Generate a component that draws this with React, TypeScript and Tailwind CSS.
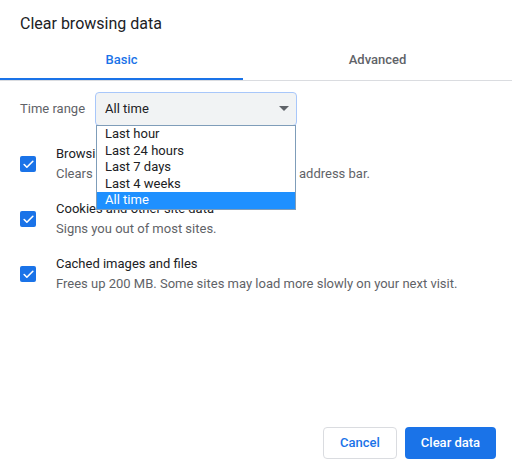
import { Check } from "lucide-react";

const items = [
  { title: "Browsing history", desc: "Clears history and autocompletions in the address bar." },
  { title: "Cookies and other site data", desc: "Signs you out of most sites." },
  { title: "Cached images and files", desc: "Frees up 200 MB. Some sites may load more slowly on your next visit." },
];

const options = ["Last hour", "Last 24 hours", "Last 7 days", "Last 4 weeks", "All time"];

export default function App() {
  return (
    <div className="relative flex h-[468px] w-[512px] flex-col bg-white text-[13px] text-[#202124]" style={{ fontFamily: "Roboto, 'Liberation Sans', sans-serif" }}>
      <div className="px-5 pt-[14px] text-[16px] leading-5">Clear browsing data</div>
      <div className="mt-[16px] flex border-b border-[#dadce0]">
        <div className="flex h-[30px] w-[243px] items-start justify-center border-b-2 border-[#1a73e8] font-medium text-[#1a73e8]">Basic</div>
        <div className="flex h-[30px] flex-1 items-start justify-center font-medium text-[#5f6368]">Advanced</div>
      </div>
      <div className="mt-[11px] flex items-center gap-[10px] px-5">
        <span className="text-[#5f6368]">Time range</span>
        <div className="relative flex h-[34px] w-[202px] items-center rounded border border-[#a8c7fa] bg-[#f1f3f4] pl-[9px]">
          <span>All time</span>
          <svg className="absolute right-[7px] top-[13px]" width="10" height="5" viewBox="0 0 10 5"><path d="M0 0h10L5 5z" fill="#5f6368" /></svg>
          <div className="absolute left-0 top-[32px] z-10 w-[200px] border border-[#7f9db9] bg-white leading-[16.5px]">
            {options.map((o) => (
              <div key={o} className={o === "All time" ? "bg-[#1e90ff] pl-[8px] text-white" : "pl-[8px]"}>{o}</div>
            ))}
          </div>
        </div>
      </div>
      <div className="mt-[18px] flex flex-col gap-[15px] px-5">
        {items.map((it) => (
          <div key={it.title} className="flex items-center gap-5">
            <div className="flex h-4 w-4 items-center justify-center rounded-[2px] bg-[#1a73e8]">
              <Check size={13} strokeWidth={3} color="white" />
            </div>
            <div className="leading-5">
              <div>{it.title}</div>
              <div className="text-[#5f6368]">{it.desc}</div>
            </div>
          </div>
        ))}
      </div>
      <div className="mt-auto flex justify-end gap-2 px-4 pb-[9px]">
        <button className="h-[32px] w-[74px] rounded border border-[#dadce0] font-medium text-[#1a73e8]">Cancel</button>
        <button className="h-[32px] w-[91px] rounded bg-[#1a73e8] font-medium text-white">Clear data</button>
      </div>
    </div>
  );
}
